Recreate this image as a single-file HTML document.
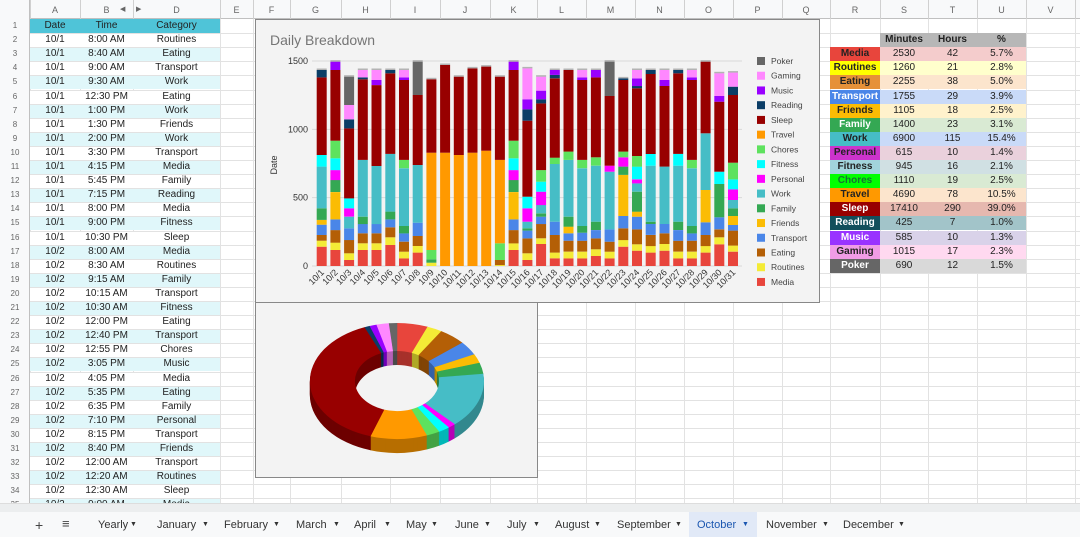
<!DOCTYPE html>
<html><head><meta charset="utf-8">
<style>
*{margin:0;padding:0;box-sizing:border-box}
body{width:1080px;height:537px;overflow:hidden;background:#fff;font-family:"Liberation Sans",Arial,sans-serif;position:relative}
.a{position:absolute}
.c{position:absolute;font-size:10px;line-height:14px;text-align:center;color:#222;white-space:nowrap}
</style></head><body>
<div id="root"></div>
<script>
var R=document.getElementById('root');var h='';
var cols=[[0,30,''],[30,80,'A'],[80,133,'B'],[133,220,'D'],[220,253,'E'],[253,290,'F'],[290,341,'G'],[341,390,'H'],[390,440,'I'],[440,490,'J'],[490,537,'K'],[537,586,'L'],[586,635,'M'],[635,684,'N'],[684,733,'O'],[733,782,'P'],[782,830,'Q'],[830,880,'R'],[880,928,'S'],[928,977,'T'],[977,1026,'U'],[1026,1075,'V'],[1075,1090,'']];
var RH=14.1,T0=19;
// header bar
h+='<div class="a" style="left:0;top:0;width:1080px;height:19px;background:#f8f9fa;border-bottom:1px solid #c0c0c0"></div>';
h+='<div class="a" style="left:0;top:0;width:30px;height:503px;background:#f8f9fa;border-right:1px solid #c0c0c0"></div>';
cols.forEach(function(c){h+='<div class="a" style="left:'+c[1]+'px;top:0;width:1px;height:19px;background:#d0d0d0"></div>';
 h+='<div class="a" style="left:'+c[1]+'px;top:19px;width:1px;height:484px;background:#e2e2e2"></div>';
 if(c[2])h+='<div class="c" style="left:'+c[0]+'px;width:'+(c[1]-c[0])+'px;top:3px;color:#666;font-size:9px">'+c[2]+'</div>';});
h+='<div class="c" style="left:120px;top:3px;font-size:7px;color:#666">&#9664;</div><div class="c" style="left:136px;top:3px;font-size:7px;color:#666">&#9654;</div>';
for(var r=1;r<=35;r++){var y=T0+(r-1)*RH;
 h+='<div class="a" style="left:30px;top:'+(y+RH)+'px;width:1050px;height:1px;background:#e2e2e2"></div>';
 h+='<div class="c" style="left:0;width:30px;top:'+y+'px;font-size:8px;color:#666">'+r+'</div>';}
var data=[['10/1','8:00 AM','Routines'],['10/1','8:40 AM','Eating'],['10/1','9:00 AM','Transport'],['10/1','9:30 AM','Work'],['10/1','12:30 PM','Eating'],['10/1','1:00 PM','Work'],['10/1','1:30 PM','Friends'],['10/1','2:00 PM','Work'],['10/1','3:30 PM','Transport'],['10/1','4:15 PM','Media'],['10/1','5:45 PM','Family'],['10/1','7:15 PM','Reading'],['10/1','8:00 PM','Media'],['10/1','9:00 PM','Fitness'],['10/1','10:30 PM','Sleep'],['10/2','8:00 AM','Media'],['10/2','8:30 AM','Routines'],['10/2','9:15 AM','Family'],['10/2','10:15 AM','Transport'],['10/2','10:30 AM','Fitness'],['10/2','12:00 PM','Eating'],['10/2','12:40 PM','Transport'],['10/2','12:55 PM','Chores'],['10/2','3:05 PM','Music'],['10/2','4:05 PM','Media'],['10/2','5:35 PM','Eating'],['10/2','6:35 PM','Family'],['10/2','7:10 PM','Personal'],['10/2','8:15 PM','Transport'],['10/2','8:40 PM','Friends'],['10/2','12:00 AM','Transport'],['10/2','12:20 AM','Routines'],['10/2','12:30 AM','Sleep'],['10/2','9:00 AM','Media']];
h+='<div class="a" style="left:30px;top:19px;width:190px;height:14.1px;background:#4fc4d8"></div>';
h+='<div class="c" style="left:30px;width:50px;top:19px">Date</div><div class="c" style="left:80px;width:53px;top:19px">Time</div><div class="c" style="left:133px;width:87px;top:19px">Category</div>';
data.forEach(function(d,i){var y=T0+(i+1)*RH;
 h+='<div class="a" style="left:30px;top:'+(y+1)+'px;width:190px;height:13px;background:'+(i%2?'#e0f7fa':'#fff')+'"></div>';
 h+='<div class="c" style="left:30px;width:50px;top:'+y+'px">'+d[0]+'</div><div class="c" style="left:80px;width:53px;top:'+y+'px">'+d[1]+'</div><div class="c" style="left:133px;width:87px;top:'+y+'px">'+d[2]+'</div>';});
// right table
var tb=[['Media','#e8453c','#222','#f4cccc',2530,42,'5.7%'],['Routines','#ffff00','#222','#ffffcc',1260,21,'2.8%'],['Eating','#e69138','#222','#fce5cd',2255,38,'5.0%'],['Transport','#4a86e8','#fff','#c9daf8',1755,29,'3.9%'],['Friends','#fbbc04','#222','#fff2cc',1105,18,'2.5%'],['Family','#34a853','#fff','#d9ead3',1400,23,'3.1%'],['Work','#46bdc6','#222','#c9daf8',6900,115,'15.4%'],['Personal','#cc33cc','#222','#ead1dc',615,10,'1.4%'],['Fitness','#a2d4dc','#222','#d0e0e3',945,16,'2.1%'],['Chores','#00ff00','#137333','#d9ead3',1110,19,'2.5%'],['Travel','#ff9900','#222','#fce5cd',4690,78,'10.5%'],['Sleep','#980000','#fff','#e6b8af',17410,290,'39.0%'],['Reading','#134f5c','#fff','#a2c4c9',425,7,'1.0%'],['Music','#9933ff','#fff','#d9d2e9',585,10,'1.3%'],['Gaming','#f09ce6','#222','#ffd9f0',1015,17,'2.3%'],['Poker','#666666','#fff','#d9d9d9',690,12,'1.5%']];
var y2=T0+RH;
h+='<div class="a" style="left:880px;top:'+y2+'px;width:146px;height:14px;background:#b7b7b7"></div>';
['Minutes','Hours','%'].forEach(function(t,i){h+='<div class="c" style="left:'+[880,928,977][i]+'px;width:'+[48,49,49][i]+'px;top:'+y2+'px;font-weight:bold">'+t+'</div>';});
tb.forEach(function(t,i){var y=T0+(i+2)*RH;
 h+='<div class="a" style="left:830px;top:'+y+'px;width:50px;height:14.1px;background:'+t[1]+'"></div><div class="a" style="left:880px;top:'+y+'px;width:146px;height:14.1px;background:'+t[3]+'"></div>';
 h+='<div class="c" style="left:830px;width:50px;top:'+y+'px;font-weight:bold;color:'+t[2]+'">'+t[0]+'</div>';
 h+='<div class="c" style="left:880px;width:48px;top:'+y+'px">'+t[4]+'</div><div class="c" style="left:928px;width:49px;top:'+y+'px">'+t[5]+'</div><div class="c" style="left:977px;width:49px;top:'+y+'px">'+t[6]+'</div>';});
// bottom
h+='<div class="a" style="left:0;top:503px;width:1080px;height:9px;background:#eceeef;border-top:1px solid #ddd"></div>';
h+='<div class="a" style="left:0;top:512px;width:1080px;height:25px;background:#f8f9fa"></div>';
h+='<div class="a" style="left:689px;top:512px;width:68px;height:25px;background:#e1e9f7"></div>';
h+='<div class="c" style="left:35px;top:518px;font-size:14px;color:#444">+</div><div class="c" style="left:62px;top:517px;font-size:13px;color:#444">&#8801;</div>';
[['Yearly',98,133],['January',157,205],['February',224,276],['March',296,336],['April',354,387],['May',406,434],['June',455,487],['July',507,536],['August',555,597],['September',617,678],['October',697,745],['November',766,825],['December',843,901]].forEach(function(t){var col=t[0]=='October'?'#1a56b0':'#333';
 h+='<div class="c" style="left:'+t[1]+'px;top:518px;font-size:11px;color:'+col+';text-align:left">'+t[0]+'</div><div class="c" style="left:'+(t[2]-3)+'px;top:518px;font-size:7px;color:'+col+'">&#9660;</div>';});
// charts
var C=['#e8453c','#f4eb36','#b45f06','#4a86e8','#fbbc04','#34a853','#46bdc6','#ff00ff','#00ffff','#5ee25e','#ff9900','#980000','#0b3d66','#9900ff','#ff88ff','#666666'];
var N=['Media','Routines','Eating','Transport','Friends','Family','Work','Personal','Fitness','Chores','Travel','Sleep','Reading','Music','Gaming','Poker'];
// cumulative tops: [catIndex,top]
var D=[
[[0,141],[1,185],[2,227],[3,302],[4,337],[5,422],[6,727],[8,812],[11,1380],[12,1434]],
[[0,117],[1,171],[2,263],[3,341],[4,541],[5,629],[7,702],[8,788],[9,917],[11,1434],[13,1495]],
[[0,44],[1,93],[2,190],[3,276],[6,361],[7,422],[8,495],[11,1007],[12,1073],[14,1178],[15,1385]],
[[0,117],[1,166],[2,239],[3,307],[5,361],[6,776],[11,1366],[12,1380],[14,1434]],
[[0,117],[1,166],[2,239],[3,307],[6,732],[11,1324],[13,1361],[14,1434]],
[[0,154],[1,210],[2,283],[3,341],[5,398],[6,820],[11,1410],[12,1434]],
[[0,56],[1,105],[2,178],[3,239],[5,293],[6,715],[9,776],[11,1361],[13,1380],[14,1434]],
[[0,98],[1,146],[2,220],[3,317],[6,739],[11,1251],[15,1495]],
[[1,24],[5,49],[9,117],[10,829],[11,1366]],
[[10,829],[11,1471]],[[10,812],[11,1385]],[[10,829],[11,1446]],[[10,844],[11,1459]],
[[1,7],[2,44],[9,166],[10,776],[11,1385]],
[[0,117],[1,166],[2,263],[3,341],[4,541],[5,629],[7,702],[8,788],[9,917],[11,1434],[13,1495]],
[[0,44],[1,93],[2,202],[3,259],[5,276],[6,324],[7,422],[8,507],[11,1063],[12,1146],[13,1220],[14,1446]],
[[0,161],[1,202],[2,307],[3,361],[5,385],[6,446],[7,544],[8,617],[9,702],[11,1190],[12,1220],[13,1283],[14,1385]],
[[0,56],[1,98],[2,227],[3,324],[6,746],[9,793],[11,1373],[12,1398],[13,1434]],
[[0,56],[1,105],[2,185],[3,239],[4,288],[5,361],[6,776],[9,837],[11,1434]],
[[0,56],[1,105],[2,185],[3,244],[5,293],[6,715],[9,776],[11,1361],[13,1380],[14,1434]],
[[0,73],[1,122],[2,202],[3,263],[5,324],[6,734],[9,795],[11,1380],[13,1434]],
[[0,56],[1,105],[2,178],[3,268],[6,690],[7,734],[11,1244],[15,1495]],
[[0,141],[1,190],[2,276],[3,366],[4,666],[5,727],[7,795],[9,837],[11,1361],[12,1373]],
[[0,112],[1,159],[2,268],[3,361],[4,398],[5,544],[6,605],[7,634],[8,727],[9,805],[11,1300],[12,1317],[13,1373],[14,1434]],
[[0,98],[1,146],[2,227],[3,307],[5,324],[6,734],[8,820],[11,1405],[12,1434]],
[[0,112],[1,161],[2,239],[3,307],[6,727],[11,1317],[13,1361],[14,1434]],
[[0,56],[1,105],[2,185],[3,263],[5,324],[6,734],[8,820],[11,1410],[12,1434]],
[[0,56],[1,105],[2,185],[3,239],[5,293],[6,715],[9,776],[11,1361],[13,1380],[14,1434]],
[[0,98],[1,146],[2,227],[3,320],[4,556],[6,971],[11,1495]],
[[0,159],[1,210],[2,268],[3,356],[5,600],[8,690],[11,1202],[13,1244],[14,1410]],
[[0,105],[1,149],[2,259],[3,300],[4,366],[5,422],[6,483],[7,561],[8,634],[9,756],[11,1251],[12,1312],[14,1415]]];
var s='<svg class="a" style="left:0;top:0" width="1080" height="537" xmlns="http://www.w3.org/2000/svg" font-family="Liberation Sans, Arial, sans-serif">';
s+='<rect x="255.5" y="19.5" width="564" height="283" fill="#f3f3f3" stroke="#888"/>';
s+='<rect x="255.5" y="302.5" width="282" height="175" fill="#f3f3f3" stroke="#888"/>';
s+='<text x="270" y="45" font-size="14" fill="#757575">Daily Breakdown</text>';
function Y(v){return 266-v*205/1500;}
[0,500,1000,1500].forEach(function(v){s+='<line x1="312" x2="742" y1="'+Y(v)+'" y2="'+Y(v)+'" stroke="#d8d8d8"/><text x="308" y="'+(Y(v)+3)+'" font-size="9" text-anchor="end" fill="#333">'+v+'</text>';});
s+='<text transform="translate(277,165) rotate(-90)" font-size="9" text-anchor="middle" fill="#333">Date</text>';
D.forEach(function(d,i){var x=316.7+i*13.71,prev=0;
 d.forEach(function(p){s+='<rect x="'+x.toFixed(1)+'" y="'+Y(p[1]).toFixed(1)+'" width="10" height="'+(Y(prev)-Y(p[1])).toFixed(1)+'" fill="'+C[p[0]]+'"/>';prev=p[1];});
 s+='<rect x="'+x.toFixed(1)+'" y="'+(Y(prev)-1.5).toFixed(1)+'" width="10" height="1.5" fill="#888" opacity=".6"/>';
 s+='<text transform="translate('+(x+8).toFixed(1)+',273) rotate(-45)" font-size="9" text-anchor="end" fill="#333">10/'+(i+1)+'</text>';});
for(var k=15;k>=0;k--){var ly=61+(15-k)*14.73;s+='<rect x="757" y="'+(ly-4)+'" width="8" height="8" fill="'+C[k]+'"/><text x="771" y="'+(ly+3)+'" font-size="8.5" fill="#444">'+N[k]+'</text>';}
// donut
var pc=[5.7,2.8,5.0,3.9,2.5,3.1,15.4,1.4,2.1,2.5,10.5,39.0,1.0,1.3,2.3,1.5],cx=397,cy=381,rx=87,ry=58,ix=42,iy=30,dep=14;
function pt(a,Rx,Ry,oy){return [(cx+Rx*Math.sin(a)).toFixed(1),(cy+oy-Ry*Math.cos(a)).toFixed(1)];}
function slice(a0,a1,oy){var p1=pt(a0,rx,ry,oy),p2=pt(a1,rx,ry,oy),p3=pt(a1,ix,iy,oy),p4=pt(a0,ix,iy,oy),lg=(a1-a0)>Math.PI?1:0;
 return 'M'+p1+' A'+rx+' '+ry+' 0 '+lg+' 1 '+p2+' L'+p3+' A'+ix+' '+iy+' 0 '+lg+' 0 '+p4+'Z';}
function dark(c){var n=parseInt(c.slice(1),16),r=(n>>16)*0.72|0,g=((n>>8)&255)*0.72|0,b=(n&255)*0.72|0;return 'rgb('+r+','+g+','+b+')';}
for(var o=dep;o>=0;o--){var a=0;pc.forEach(function(p,i){var a1=a+p/100*2*Math.PI;s+='<path d="'+slice(a,a1+0.004,o)+'" fill="'+(o?dark(C[i]):C[i])+'"/>';a=a1;});}
s+='</svg>';
h+=s;R.innerHTML=h;
</script>
</body></html>
